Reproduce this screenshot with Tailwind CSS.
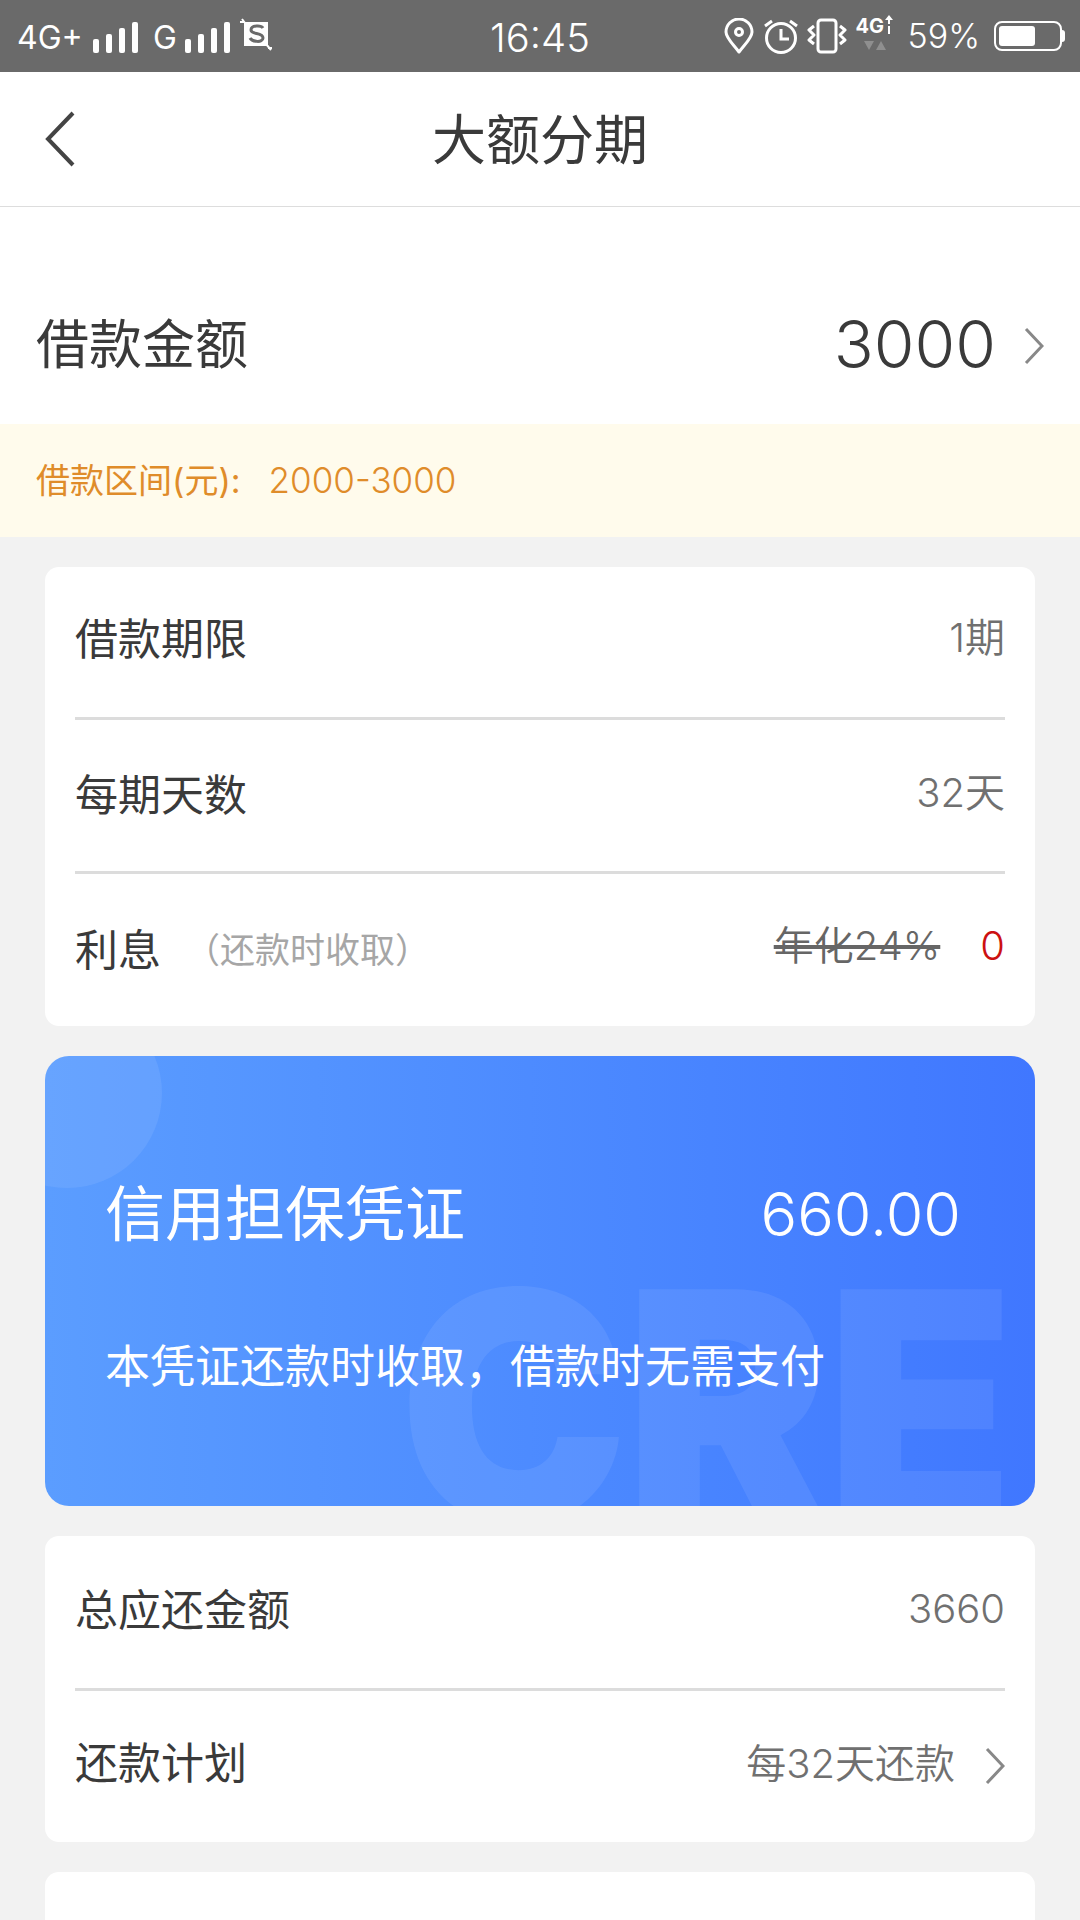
<!DOCTYPE html>
<html lang="zh">
<head>
<meta charset="UTF-8">
<title>大额分期</title>
<script src="https://cdn.jsdelivr.net/npm/@tailwindcss/browser@4"></script>
</head>
<body class="w-[1080px] h-[1920px] overflow-hidden bg-[#f2f2f2] font-['Inter','Noto_Sans_CJK_SC',sans-serif] text-[#3a3a3a]">

<!-- status bar -->
<div class="h-[72px] bg-[#6a6a6a] text-white relative flex items-center">
  <div class="flex items-center pl-[17px] pt-[3px] text-[32px] leading-none">
    <span class="w-[74px]">4G+</span>
    <svg width="50" height="34" viewBox="0 0 50 34" fill="#fff"><rect x="2" y="18" width="6" height="14" rx="2"/><rect x="15" y="13" width="6" height="19" rx="2"/><rect x="28" y="7" width="6" height="25" rx="2"/><rect x="41" y="1" width="6" height="31" rx="2"/></svg>
    <span class="ml-[12px] w-[30px]">G</span>
    <svg width="50" height="34" viewBox="0 0 50 34" fill="#fff"><rect x="2" y="18" width="6" height="14" rx="2"/><rect x="15" y="13" width="6" height="19" rx="2"/><rect x="28" y="7" width="6" height="25" rx="2"/><rect x="41" y="1" width="6" height="31" rx="2"/></svg>
    <svg class="ml-[6px] -mt-[6px]" width="34" height="34" viewBox="0 0 34 34"><rect x="5" y="4" width="24" height="24" fill="#fff"/><path d="M3 1l3 4M27 26l5 6M1 4h4M29 30h4" stroke="#fff" stroke-width="2"/><path d="M24 10c-2-3-12-3-12 2 0 5 12 2 12 8 0 5-11 4-13 0" fill="none" stroke="#6a6a6a" stroke-width="3"/></svg>
  </div>
  <span class="absolute left-[490px] top-[16px] text-[40px] leading-[44px] font-[350]">16:45</span>
  <div class="absolute right-[15px] top-0 h-[72px] flex items-center">
    <svg width="30" height="36" viewBox="0 0 30 36" fill="none" stroke="#fff" stroke-width="3"><path d="M15 34C9 26 2 20 2 14a13 13 0 0 1 26 0c0 6-7 12-13 20z" stroke-linejoin="round"/><circle cx="15" cy="14" r="3.5"/></svg>
    <svg class="ml-[9px]" width="36" height="36" viewBox="0 0 36 36" fill="none" stroke="#fff" stroke-width="3"><circle cx="18" cy="20" r="14.5"/><path d="M18 11v10h8M2 8l7-5M34 8l-7-5"/></svg>
    <svg class="ml-[8px]" width="40" height="36" viewBox="0 0 40 36" fill="none" stroke="#fff" stroke-width="3"><rect x="11" y="2" width="18" height="32" rx="3"/><path d="M7 8l-5 4 5 5-5 5 5 4M33 8l5 4-5 5 5 5-5 4" stroke-linejoin="round"/></svg>
    <div class="ml-[9px] w-[38px] h-[44px] relative -mt-[5px]">
      <span class="absolute left-0 top-[2px] text-[20px] leading-[24px] font-bold">4G</span>
      <svg class="absolute right-0 top-[3px]" width="10" height="20" viewBox="0 0 10 20" fill="#fff"><path d="M5 0l4 5H6v4H4V5H1zM4 11h2v8H4z"/></svg>
      <svg class="absolute left-[7px] top-[26px]" width="24" height="14" viewBox="0 0 24 14" fill="#8f8f8f"><path d="M1 3h10l-5 9zM13 12h10l-5-9z"/></svg>
    </div>
    <span class="ml-[14px] text-[34px] leading-none font-[350]">59%</span>
    <div class="ml-[14px] flex items-center">
      <div class="w-[68px] h-[30px] rounded-[8px] border-[2px] border-white p-[3px]"><div class="w-[36px] h-full rounded-[3px] bg-white"></div></div>
      <div class="w-[3px] h-[12px] bg-white rounded-r-sm"></div>
    </div>
  </div>
</div>

<!-- nav -->
<div class="h-[135px] bg-white border-b border-[#ddd] relative flex items-center justify-center">
  <svg class="absolute left-[43px] top-[39px]" width="34" height="56" viewBox="0 0 34 56" fill="none" stroke="#444" stroke-width="4"><path d="M30 2L5 28l25 26"/></svg>
  <span class="text-[54px] leading-none mt-[4px]">大额分期</span>
</div>

<!-- amount -->
<div class="h-[217px] bg-white flex items-center justify-between px-[36px] pt-[60px]">
  <span class="text-[53px] leading-none">借款金额</span>
  <div class="flex items-center">
    <span class="text-[66px] leading-none font-[350] -mt-[4px]">3000</span>
    <svg class="ml-[28px]" width="20" height="38" viewBox="0 0 20 38" fill="none" stroke="#888" stroke-width="3"><path d="M2 2l16 17L2 36"/></svg>
  </div>
</div>
<div class="h-[113px] bg-[#fffbec] flex items-center pl-[36px] text-[#df8c2a] text-[34px] leading-none">
  <span>借款区间(元):</span><span class="ml-[28px] text-[35px] font-[350]">2000-3000</span>
</div>

<div class="px-[45px] pt-[30px] flex flex-col gap-[30px]">
  <!-- terms -->
  <div class="bg-white rounded-[14px] px-[30px]">
    <div class="h-[153px] flex items-center justify-between border-b-[3px] border-[#dcdcdc]">
      <span class="text-[43px] leading-none -mt-[6px]">借款期限</span><span class="text-[40px] leading-none text-[#707070] font-[350] -mt-[8px]">1期</span>
    </div>
    <div class="h-[154px] flex items-center justify-between border-b-[3px] border-[#dcdcdc]">
      <span class="text-[43px] leading-none">每期天数</span><span class="text-[40px] leading-none text-[#707070] font-[350] -mt-[6px]">32天</span>
    </div>
    <div class="h-[152px] flex items-center justify-between">
      <div class="flex items-center"><span class="text-[43px] leading-none">利息</span><span class="ml-[24px] text-[35px] leading-none text-[#a6a6a6]">（还款时收取）</span></div>
      <div class="flex items-center -mt-[8px]"><span class="text-[40px] leading-none text-[#666] line-through font-[350]">年化24%</span><span class="ml-[40px] text-[40px] leading-none text-[#cc1111] font-[350]">0</span></div>
    </div>
  </div>

  <!-- blue card -->
  <div class="h-[450px] rounded-[24px] relative overflow-hidden bg-gradient-to-r from-[#5b9dff] to-[#4077ff] text-white">
    <div class="absolute -left-[73px] -top-[58px] w-[190px] h-[190px] rounded-full bg-white/[0.08]"></div>
    <span class="absolute left-[354px] top-[190px] origin-left scale-x-[0.96] text-[320px] leading-[1] font-black text-white/[0.08] font-['Inter'] tracking-[-4px]">CRE</span>
    <div class="relative pl-[60px] pr-[74px] pt-[123px] flex items-center justify-between">
      <span class="text-[60px] leading-[70px]">信用担保凭证</span><span class="text-[61px] leading-[70px] font-[350]">660.00</span>
    </div>
    <div class="relative pl-[60px] mt-[93px] text-[45px] leading-[50px]">本凭证还款时收取，借款时无需支付</div>
  </div>

  <!-- repayment -->
  <div class="bg-white rounded-[14px] px-[30px]">
    <div class="h-[155px] flex items-center justify-between border-b-[3px] border-[#dcdcdc]">
      <span class="text-[43px] leading-none -mt-[4px]">总应还金额</span><span class="text-[40px] leading-none text-[#707070] font-[350] -mt-[6px]">3660</span>
    </div>
    <div class="h-[151px] flex items-center justify-between">
      <span class="text-[43px] leading-none -mt-[6px]">还款计划</span>
      <div class="flex items-center -mt-[6px]"><span class="text-[40px] leading-none text-[#707070] font-[350]">每32天还款</span><svg class="ml-[30px] mt-[4px]" width="20" height="38" viewBox="0 0 20 38" fill="none" stroke="#888" stroke-width="3"><path d="M2 2l16 17L2 36"/></svg></div>
    </div>
  </div>

  <div class="h-[100px] bg-white rounded-[14px]"></div>
</div>
</body>
</html>
